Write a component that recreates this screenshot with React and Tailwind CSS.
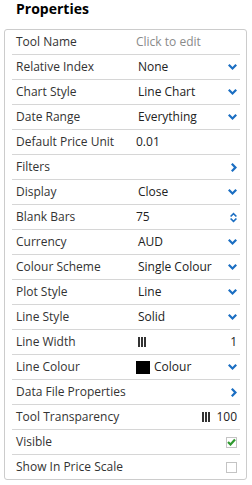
import React from "react";

const ChevronDown = () => (
  <svg width="9" height="6" viewBox="0 0 9 6" className="block">
    <polygon points="0,1.6 1.6,0 4.5,2.9 7.4,0 9,1.6 4.5,6" fill="#1b6ec2" />
  </svg>
);

const ChevronRight = () => (
  <svg width="6" height="9" viewBox="0 0 6 9" className="block">
    <polygon points="1.6,0 6,4.5 1.6,9 0,7.4 2.9,4.5 0,1.6" fill="#1b6ec2" />
  </svg>
);

const Spinner = () => (
  <svg width="7" height="11" viewBox="0 0 7 11" className="block">
    <polygon points="0,4 3.5,0.5 7,4 5.8,5 3.5,2.7 1.2,5" fill="#1b6ec2" />
    <polygon points="0,7 3.5,10.5 7,7 5.8,6 3.5,8.3 1.2,6" fill="#1b6ec2" />
  </svg>
);

const Bars = () => (
  <div className="flex gap-[1px] h-[10px]">
    <div className="w-[2px] bg-[#333]" />
    <div className="w-[2px] bg-[#333]" />
    <div className="w-[2px] bg-[#333]" />
  </div>
);

const Checkbox = ({ checked }) => (
  <div className="w-[11px] h-[11px] border border-[#c4c4c4] bg-white flex items-center justify-center">
    {checked && (
      <svg width="9" height="8" viewBox="0 0 9 8" className="block">
        <polyline points="1,4 3.5,6.5 8,1.5" fill="none" stroke="#2f9a2f" strokeWidth="2.2" />
      </svg>
    )}
  </div>
);

function Row({ label, children, last }) {
  return (
    <div
      className={
        "flex items-center " +
        (last ? "h-[24px]" : "h-[25px] border-b border-[#d6d6d6]")
      }
    >
      <div className="w-[124px] pl-[4px] text-[#333] whitespace-nowrap">{label}</div>
      <div className="flex-1 flex items-center pr-[3px] text-[#222]">{children}</div>
    </div>
  );
}

const Drop = ({ value }) => (
  <>
    <span className="pl-[2px] flex-1">{value}</span>
    <ChevronDown />
  </>
);

export default function App() {
  return (
    <div className="w-[252px] h-[485px] bg-white text-[12px] font-['Open_Sans',sans-serif]">
      <div className="pl-[16px] font-bold text-[14px] leading-[18px] text-black mb-[11px]">
        Properties
      </div>
      <div className="ml-[4px] w-[243px] border border-[#cccccc] rounded-[3px] pl-[7px] pr-[6px]">
        <Row label="Tool Name">
          <span className="text-[#8a8a8a]">Click to edit</span>
        </Row>
        <Row label="Relative Index">
          <Drop value="None" />
        </Row>
        <Row label="Chart Style">
          <Drop value="Line Chart" />
        </Row>
        <Row label="Date Range">
          <Drop value="Everything" />
        </Row>
        <Row label="Default Price Unit">
          <span>0.01</span>
        </Row>
        <Row label="Filters">
          <span className="flex-1" />
          <ChevronRight />
        </Row>
        <Row label="Display">
          <Drop value="Close" />
        </Row>
        <Row label="Blank Bars">
          <span className="flex-1">75</span>
          <Spinner />
        </Row>
        <Row label="Currency">
          <Drop value="AUD" />
        </Row>
        <Row label="Colour Scheme">
          <Drop value="Single Colour" />
        </Row>
        <Row label="Plot Style">
          <Drop value="Line" />
        </Row>
        <Row label="Line Style">
          <Drop value="Solid" />
        </Row>
        <Row label="Line Width">
          <span className="pl-[2px] flex-1">
            <Bars />
          </span>
          <span>1</span>
        </Row>
        <Row label="Line Colour">
          <div className="w-[14px] h-[13px] bg-black mr-[4px]" />
          <span className="flex-1">Colour</span>
          <ChevronDown />
        </Row>
        <Row label="Data File Properties">
          <span className="flex-1" />
          <ChevronRight />
        </Row>
        <Row label="Tool Transparency">
          <span className="flex-1" />
          <Bars />
          <span className="ml-[6px]">100</span>
        </Row>
        <Row label="Visible">
          <span className="flex-1" />
          <Checkbox checked />
        </Row>
        <Row label="Show In Price Scale" last>
          <span className="flex-1" />
          <Checkbox />
        </Row>
      </div>
    </div>
  );
}
